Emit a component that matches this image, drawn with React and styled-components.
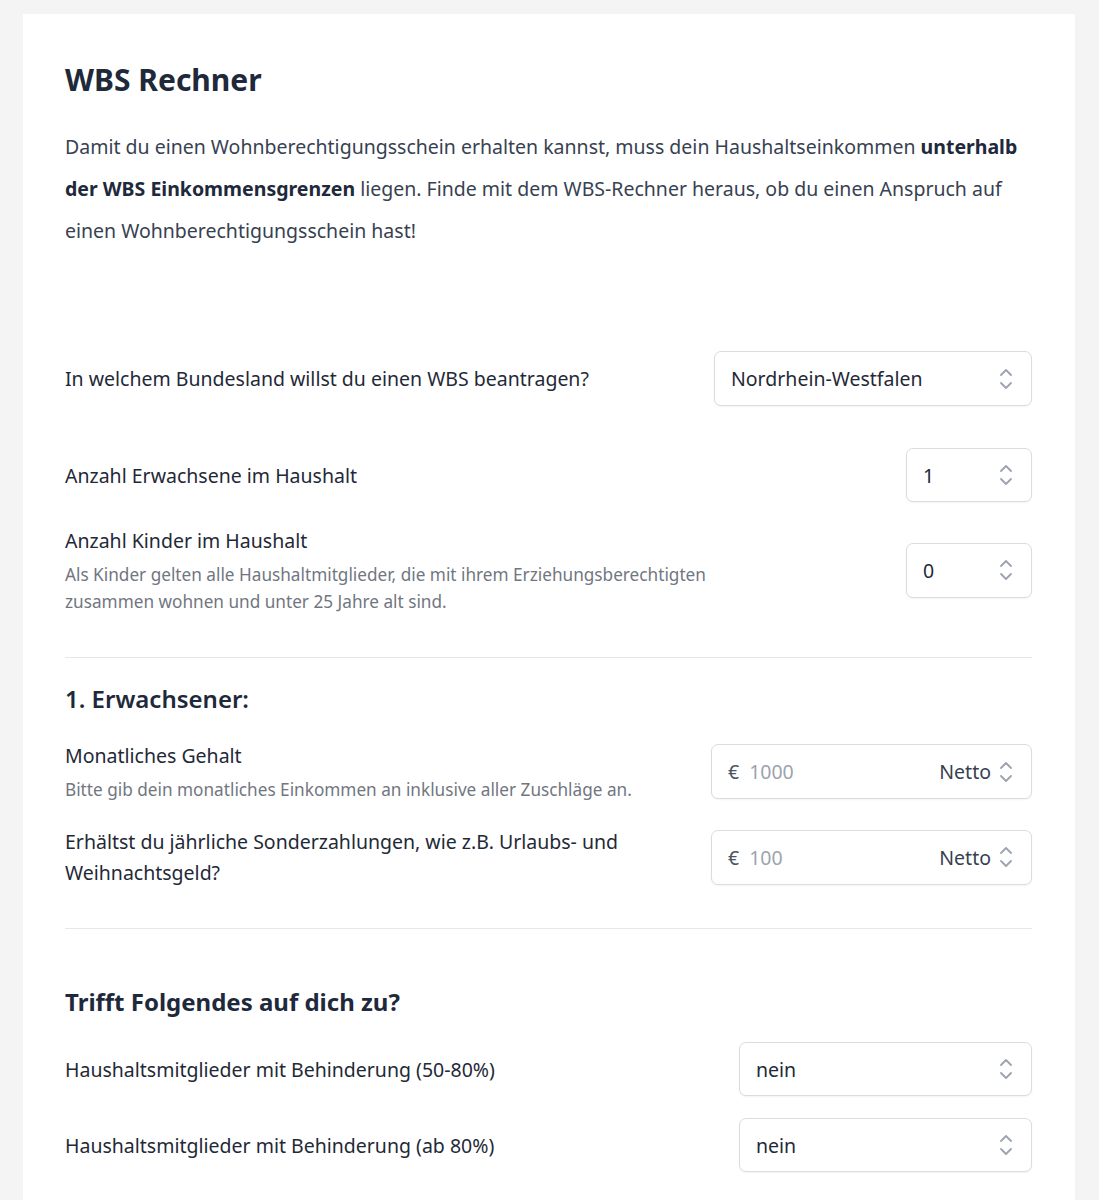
import React from 'react'
import styled, { createGlobalStyle } from 'styled-components'

const GlobalStyle = createGlobalStyle`
  body {
    margin: 0;
    background: #f4f4f5;
    font-family: "Noto Sans", "Open Sans", sans-serif;
    color: #1f2937;
  }
`

const Page = styled.div`
  padding: 14px 24px 0 23px;
`

const Card = styled.div`
  background: #fff;
  padding: 46px 43px 40px 42px;
  min-height: 1150px;
`

const Title = styled.h1`
  margin: 0 0 26px;
  font-size: 30px;
  font-weight: 700;
  color: #1e293b;
  line-height: 40px;
`

const Intro = styled.p`
  margin: 0;
  font-size: 19.5px;
  line-height: 42px;
  color: #374151;
  b {
    color: #1e293b;
  }
`

const Form = styled.div`
  margin-top: 99px;
`

const Row = styled.div`
  display: flex;
  justify-content: space-between;
  align-items: center;
  gap: 24px;
  margin-top: ${(p) => p.$mt || 0}px;
`

const LabelBlock = styled.div`
  display: flex;
  flex-direction: column;
`

const Label = styled.div`
  font-size: 19.5px;
  line-height: 31px;
  color: #1f2937;
  max-width: ${(p) => p.$max || 'none'};
`

const Hint = styled.div`
  font-size: 17.2px;
  line-height: 27px;
  color: #71767f;
  margin-top: 5px;
`

const Field = styled.div`
  flex: none;
  width: ${(p) => p.$w}px;
  height: ${(p) => p.$h || 55}px;
  box-sizing: border-box;
  border: 1px solid #d9dce1;
  border-radius: 7px;
  box-shadow: 0 1px 2px rgba(0, 0, 0, 0.05);
  display: flex;
  align-items: center;
  padding: 0 17px 0 16px;
  font-size: 19.5px;
  color: #1f2937;
  background: #fff;
`

const Value = styled.span`
  flex: 1;
  color: ${(p) => (p.$placeholder ? '#9ca3af' : '#1f2937')};
`

const Currency = styled.span`
  color: #4b5563;
  margin-right: 10px;
`

const Unit = styled.span`
  color: #374151;
  margin-right: 7px;
`

const Divider = styled.hr`
  border: 0;
  border-top: 1px solid #e5e7eb;
  margin: ${(p) => p.$mt}px 0 0;
`

const SectionTitle = styled.h2`
  margin: ${(p) => p.$mt}px 0 0;
  font-size: 24px;
  font-weight: ${(p) => p.$weight || 600};
  line-height: 32px;
  color: #1e293b;
`

const Chevrons = () => (
  <svg width="16" height="26" viewBox="0 0 16 26" fill="none" stroke="#9ca3af" strokeWidth="1.8" strokeLinecap="round" strokeLinejoin="round">
    <path d="M3 9l5-5 5 5" />
    <path d="M3 17l5 5 5-5" />
  </svg>
)

const Select = ({ w, h, children }) => (
  <Field $w={w} $h={h}>
    <Value>{children}</Value>
    <Chevrons />
  </Field>
)

const MoneyInput = ({ placeholder }) => (
  <Field $w={321}>
    <Currency>€</Currency>
    <Value $placeholder>{placeholder}</Value>
    <Unit>Netto</Unit>
    <Chevrons />
  </Field>
)

const App = () => (
  <Page>
    <GlobalStyle />
    <Card>
      <Title>WBS Rechner</Title>
      <Intro>
        Damit du einen Wohnberechtigungsschein erhalten kannst, muss dein Haushaltseinkommen{' '}
        <b>unterhalb der WBS Einkommensgrenzen</b> liegen. Finde mit dem WBS-Rechner heraus, ob du einen
        Anspruch auf einen Wohnberechtigungsschein hast!
      </Intro>

      <Form>
        <Row>
          <Label>In welchem Bundesland willst du einen WBS beantragen?</Label>
          <Select w={318}>Nordrhein-Westfalen</Select>
        </Row>
        <Row $mt={42}>
          <Label>Anzahl Erwachsene im Haushalt</Label>
          <Select w={126} h={54}>1</Select>
        </Row>
        <Row $mt={23}>
          <LabelBlock>
            <Label>Anzahl Kinder im Haushalt</Label>
            <Hint>
              Als Kinder gelten alle Haushaltmitglieder, die mit ihrem Erziehungsberechtigten
              <br />
              zusammen wohnen und unter 25 Jahre alt sind.
            </Hint>
          </LabelBlock>
          <Select w={126}>0</Select>
        </Row>

        <Divider $mt={42} />

        <SectionTitle $mt={25}>1. Erwachsener:</SectionTitle>
        <Row $mt={25}>
          <LabelBlock>
            <Label>Monatliches Gehalt</Label>
            <Hint>Bitte gib dein monatliches Einkommen an inklusive aller Zuschläge an.</Hint>
          </LabelBlock>
          <MoneyInput placeholder="1000" />
        </Row>
        <Row $mt={23}>
          <Label $max="580px">Erhältst du jährliche Sonderzahlungen, wie z.B. Urlaubs- und Weihnachtsgeld?</Label>
          <MoneyInput placeholder="100" />
        </Row>

        <Divider $mt={40} />

        <SectionTitle $mt={57} $weight={700}>Trifft Folgendes auf dich zu?</SectionTitle>
        <Row $mt={24}>
          <Label>Haushaltsmitglieder mit Behinderung (50-80%)</Label>
          <Select w={293} h={54}>nein</Select>
        </Row>
        <Row $mt={22}>
          <Label>Haushaltsmitglieder mit Behinderung (ab 80%)</Label>
          <Select w={293} h={54}>nein</Select>
        </Row>
      </Form>
    </Card>
  </Page>
)

export default App
